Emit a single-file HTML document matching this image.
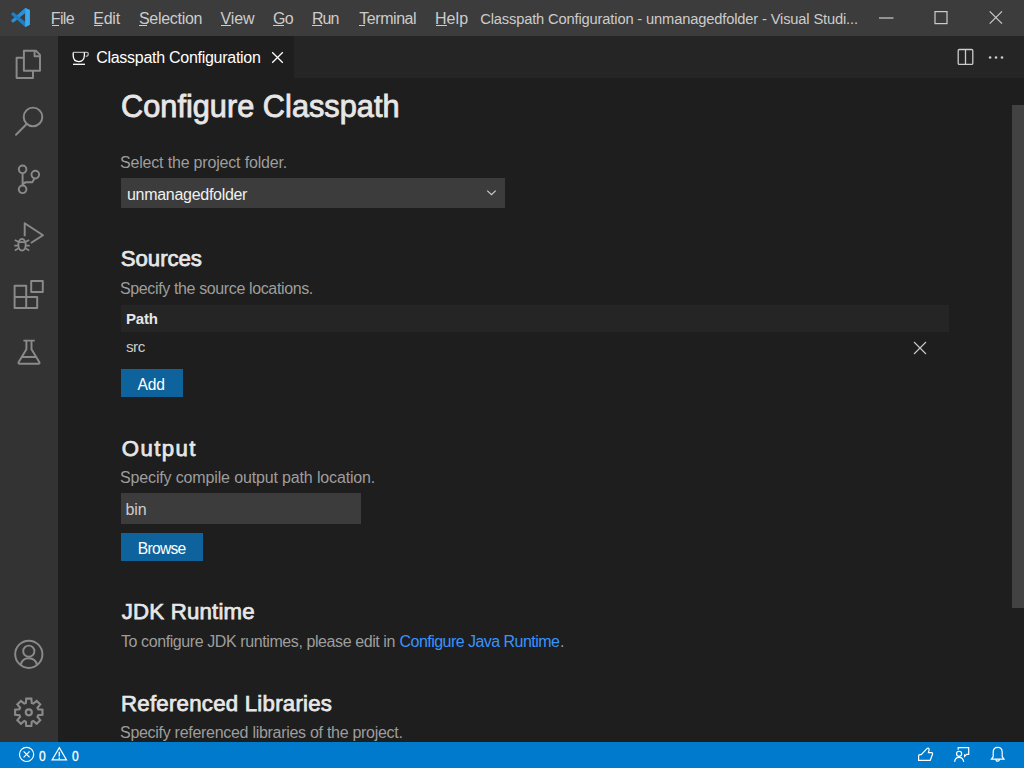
<!DOCTYPE html>
<html><head><meta charset="utf-8">
<style>
*{margin:0;padding:0;box-sizing:border-box}
html,body{width:1024px;height:768px;overflow:hidden;background:#1e1e1e;font-family:"Liberation Sans",sans-serif}
.a{position:absolute;white-space:pre;line-height:1}
.b{position:absolute}
svg{position:absolute;overflow:visible}
</style></head><body>
<div class="b" style="left:0;top:0;width:1024px;height:36px;background:#3c3c3c"></div>
<div class="b" style="left:0;top:36px;width:58px;height:706px;background:#333333"></div>
<div class="b" style="left:58px;top:36px;width:966px;height:42px;background:#252526"></div>
<div class="b" style="left:58px;top:36px;width:236px;height:42px;background:#1e1e1e"></div>
<div class="b" style="left:121px;top:178px;width:384px;height:30px;background:#3c3c3c"></div>
<div class="b" style="left:121px;top:305px;width:828px;height:27px;background:#252526"></div>
<div class="b" style="left:121px;top:369px;width:62px;height:28px;background:#0e639c"></div>
<div class="b" style="left:121px;top:493px;width:240px;height:31px;background:#3c3c3c"></div>
<div class="b" style="left:121px;top:533px;width:82px;height:28px;background:#0e639c"></div>
<div class="b" style="left:1012px;top:105px;width:12px;height:503px;background:#424242"></div>
<div class="a" style="left:50.80px;top:10.71px;font-size:16px;font-weight:400;color:#cccccc;letter-spacing:-0.667px;">File</div>
<div class="a" style="left:93.20px;top:10.71px;font-size:16px;font-weight:400;color:#cccccc;letter-spacing:-0.200px;">Edit</div>
<div class="a" style="left:139.00px;top:10.71px;font-size:16px;font-weight:400;color:#cccccc;letter-spacing:-0.300px;">Selection</div>
<div class="a" style="left:220.60px;top:10.71px;font-size:16px;font-weight:400;color:#cccccc;letter-spacing:-0.167px;">View</div>
<div class="a" style="left:273.00px;top:10.71px;font-size:16px;font-weight:400;color:#cccccc;letter-spacing:-0.600px;">Go</div>
<div class="a" style="left:312.00px;top:10.71px;font-size:16px;font-weight:400;color:#cccccc;letter-spacing:-0.950px;">Run</div>
<div class="a" style="left:359.20px;top:10.71px;font-size:16px;font-weight:400;color:#cccccc;letter-spacing:-0.429px;">Terminal</div>
<div class="a" style="left:435.00px;top:10.71px;font-size:16px;font-weight:400;color:#cccccc;letter-spacing:0.067px;">Help</div>
<div class="a" style="left:480.20px;top:11.81px;font-size:14.7px;font-weight:400;color:#cccccc;letter-spacing:-0.153px;">Classpath Configuration - unmanagedfolder - Visual Studi...</div>
<div class="a" style="left:96.20px;top:49.91px;font-size:16px;font-weight:400;color:#ffffff;letter-spacing:-0.277px;">Classpath Configuration</div>
<div class="a" style="left:121.00px;top:92.16px;font-size:30.7px;font-weight:400;-webkit-text-stroke:0.850px #e7e7e7;color:#e7e7e7;letter-spacing:0.028px;">Configure Classpath</div>
<div class="a" style="left:120.00px;top:154.81px;font-size:16px;font-weight:400;color:#9d9d9d;letter-spacing:-0.180px;">Select the project folder.</div>
<div class="a" style="left:127.00px;top:187.01px;font-size:16px;font-weight:400;color:#f0f0f0;letter-spacing:-0.293px;">unmanagedfolder</div>
<div class="a" style="left:120.80px;top:248.26px;font-size:22.2px;font-weight:400;-webkit-text-stroke:0.750px #e7e7e7;color:#e7e7e7;letter-spacing:-0.050px;">Sources</div>
<div class="a" style="left:120.00px;top:281.11px;font-size:16px;font-weight:400;color:#9d9d9d;letter-spacing:-0.371px;">Specify the source locations.</div>
<div class="a" style="left:126.00px;top:311.45px;font-size:15px;font-weight:700;color:#e7e7e7;letter-spacing:-0.167px;">Path</div>
<div class="a" style="left:126.00px;top:339.48px;font-size:15.2px;font-weight:400;color:#cccccc;letter-spacing:-0.500px;">src</div>
<div class="a" style="left:137.60px;top:377.14px;font-size:15.6px;font-weight:400;color:#ffffff;letter-spacing:-0.200px;">Add</div>
<div class="a" style="left:121.80px;top:437.56px;font-size:22.2px;font-weight:400;-webkit-text-stroke:0.750px #e7e7e7;color:#e7e7e7;letter-spacing:1.380px;">Output</div>
<div class="a" style="left:120.00px;top:470.31px;font-size:16px;font-weight:400;color:#9d9d9d;letter-spacing:-0.147px;">Specify compile output path location.</div>
<div class="a" style="left:125.40px;top:501.81px;font-size:16px;font-weight:400;color:#cccccc;letter-spacing:0.000px;">bin</div>
<div class="a" style="left:137.80px;top:540.94px;font-size:15.6px;font-weight:400;color:#ffffff;letter-spacing:-0.720px;">Browse</div>
<div class="a" style="left:121.80px;top:601.36px;font-size:22.2px;font-weight:400;-webkit-text-stroke:0.750px #e7e7e7;color:#e7e7e7;letter-spacing:0.210px;">JDK Runtime</div>
<div class="a" style="left:121.00px;top:633.71px;font-size:16px;font-weight:400;color:#9d9d9d;letter-spacing:-0.410px;">To configure JDK runtimes, please edit in</div>
<div class="a" style="left:399.60px;top:633.71px;font-size:16px;font-weight:400;color:#3794ff;letter-spacing:-0.538px;">Configure Java Runtime</div>
<div class="a" style="left:560.00px;top:633.71px;font-size:16px;font-weight:400;color:#9d9d9d;letter-spacing:0.000px;">.</div>
<div class="a" style="left:121.00px;top:692.56px;font-size:22.2px;font-weight:400;-webkit-text-stroke:0.750px #e7e7e7;color:#e7e7e7;letter-spacing:0.263px;">Referenced Libraries</div>
<div class="a" style="left:120.00px;top:725.01px;font-size:16px;font-weight:400;color:#9d9d9d;letter-spacing:-0.288px;">Specify referenced libraries of the project.</div>
<div class="a" style="left:51.5px;top:24.6px;width:7.4px;height:1.2px;background:#cccccc"></div><div class="a" style="left:94.1px;top:24.6px;width:7.8px;height:1.2px;background:#cccccc"></div><div class="a" style="left:139.4px;top:24.6px;width:8.1px;height:1.2px;background:#cccccc"></div><div class="a" style="left:221.4px;top:24.6px;width:9.4px;height:1.2px;background:#cccccc"></div><div class="a" style="left:273.4px;top:24.6px;width:10.5px;height:1.2px;background:#cccccc"></div><div class="a" style="left:312.3px;top:24.6px;width:9.7px;height:1.2px;background:#cccccc"></div><div class="a" style="left:358.5px;top:24.6px;width:6.9px;height:1.2px;background:#cccccc"></div><div class="a" style="left:435.9px;top:24.6px;width:10.9px;height:1.2px;background:#cccccc"></div>
<div class="b" style="left:0;top:742px;width:1024px;height:26px;background:#007acc"></div>
<svg width="1024" height="768" style="left:0;top:0" viewBox="0 0 1024 768">
 <!-- vscode logo -->
 <g>
  <path d="M25.2,7.9 L29.8,10.1 V24.7 L25.2,27 L25.2,13 L13.9,22.3 Q13.2,22.8 12.5,22.3 L11.5,21.5 Q10.8,20.8 11.5,20.1 Z" fill="#2a8fd6"/>
  <path d="M25.2,7.9 L29.8,10.1 V24.7 L25.2,27 L11.5,14.8 Q10.8,14.1 11.5,13.4 L12.5,12.6 Q13.2,12.1 13.9,12.6 L25.2,22 Z" fill="#1d7fc4"/>
  <path d="M25.2,7.9 L29.8,10.1 V24.7 L25.2,27 Z" fill="#38a8f0"/>
 </g>
 <!-- title controls -->
 <g stroke="#cccccc" fill="none" stroke-width="1.2">
  <path d="M879,18 H893.5"/>
  <rect x="935" y="11.6" width="12" height="12"/>
  <path d="M989.7,11.4 L1002,23.7 M1002,11.4 L989.7,23.7"/>
 </g>
 <!-- activity icons -->
 <g stroke="#8a8a8a" fill="none" stroke-width="1.95" stroke-linejoin="round">
  <path d="M23.9,57.8 H16.6 V77.9 H33 V70.8"/>
  <path d="M23.9,50.8 H36.1 L40,54.9 V70.8 H23.9 Z"/>
  <path d="M34.6,50.8 V56.3 H40"/>
  <circle cx="33" cy="116.9" r="9.3"/>
  <path d="M26.4,124.2 L16,134.8" stroke-linecap="round"/>
  <circle cx="22.6" cy="169.3" r="3.8"/>
  <circle cx="22.6" cy="189.3" r="3.8"/>
  <circle cx="35.3" cy="174.6" r="3.8"/>
  <path d="M22.6,173.1 V185.5 M22.6,185.5 Q23.2,182.2 26.5,182.2 H32.3 L34.6,178.3"/>
  <path d="M24.7,236.3 V223.3 L43,235.3 L30.9,243"/>
  <ellipse cx="22" cy="244.8" rx="3.7" ry="5.8"/>
  <path d="M18.4,242.1 H25.6 M14.8,239.9 L18.2,241.7 M29.2,239.9 L25.8,241.7 M14.3,245.6 H18.3 M29.7,245.6 H25.7 M14.8,250.4 L18.2,248.5 M29.2,250.4 L25.8,248.5" stroke-width="1.7"/>
  <path d="M14.6,285.8 H26.2 V297 H37.2 V307.9 H14.6 Z M14.6,297 H26.2 V307.9"/>
  <rect x="31.2" y="280.9" width="11.6" height="11.1"/>
  <path d="M23.4,340.6 H34.8 M26.4,340.6 V349.2 L18.6,362.2 Q18,363.8 19.8,363.8 H38.2 Q40,363.8 39.4,362.2 L31.5,349.2 V340.6 M22.4,357 H35.6"/>
  <circle cx="28.8" cy="654.3" r="13.6"/>
  <circle cx="28.8" cy="651.2" r="5.6"/>
  <path d="M20.8,665 Q22,658.2 28.8,658.2 Q35.6,658.2 37,665"/>
 </g>
 <!-- gear -->
 <path id="gear" d="M25.85,702.95 L26.27,698.63 L31.33,698.63 L31.75,702.95 L33.33,703.61 L36.67,700.84 L40.26,704.43 L37.49,707.77 L38.15,709.35 L42.47,709.77 L42.47,714.83 L38.15,715.25 L37.49,716.83 L40.26,720.17 L36.67,723.76 L33.33,720.99 L31.75,721.65 L31.33,725.97 L26.27,725.97 L25.85,721.65 L24.27,720.99 L20.93,723.76 L17.34,720.17 L20.11,716.83 L19.45,715.25 L15.13,714.83 L15.13,709.77 L19.45,709.35 L20.11,707.77 L17.34,704.43 L20.93,700.84 L24.27,703.61 Z" fill="none" stroke="#8a8a8a" stroke-width="2.1" stroke-linejoin="miter"/>
 <circle cx="28.8" cy="712.3" r="3.0" fill="none" stroke="#8a8a8a" stroke-width="2.2"/>
 <!-- tab icons -->
 <g stroke="#ffffff" fill="none" stroke-width="1.3">
  <path d="M73.2,52.4 H87 Q88.3,52.4 88.3,53.8 Q88.3,56.4 85.6,56.4" stroke="#b0b0b0"/>
  <path d="M73.2,52.4 V55.5 Q73.2,61.6 79,61.6 Q84.2,61.6 84.4,55 V52.4"/>
  <path d="M73,64.3 H85" stroke-width="1.3"/>
  <path d="M272.2,52.2 L282.8,62.8 M282.8,52.2 L272.2,62.8"/>
 </g>
 <g stroke="#cccccc" fill="none" stroke-width="1.3">
  <rect x="958.2" y="49.5" width="14.6" height="14.9" rx="1.2"/>
  <path d="M965.5,49.5 V64.4"/>
 </g>
 <g fill="#cccccc">
  <circle cx="990.1" cy="57.5" r="1.3"/><circle cx="996" cy="57.5" r="1.3"/><circle cx="1002" cy="57.5" r="1.3"/>
 </g>
 <!-- dropdown chevron -->
 <path d="M487.2,190.6 L491.5,194.7 L495.7,190.6" stroke="#cccccc" stroke-width="1.2" fill="none"/>
 <!-- row remove X -->
 <path d="M914,342 L926,354 M926,342 L914,354" stroke="#cccccc" stroke-width="1.1" fill="none"/>
 <!-- status icons -->
 <g stroke="#ffffff" fill="none" stroke-width="1.2">
  <circle cx="26.6" cy="754.4" r="7.1"/>
  <path d="M23.6,751.4 L29.6,757.4 M29.6,751.4 L23.6,757.4"/>
  <path d="M59.3,747.6 L66.5,759.9 H52.1 Z"/>
  <path d="M59.3,751.8 V756.4 M59.3,757.6 V758.9" stroke-width="1.4"/>
  <path d="M918.6,755.9 Q918.6,754.8 919.8,754.7 L921.2,754.6 L926.9,748.7 Q928.2,747.6 929,748.9 Q929.3,749.6 928.9,750.6 L928.4,752.7 H931.7 Q932.9,752.9 932.5,754.2 L930.2,760.4 H918.6 Z"/>
  <path d="M958.2,749.8 V747.7 H968.7 V754.3 H966.7 L964.6,756.4 V754.3"/>
  <circle cx="959.1" cy="753.8" r="2.55"/>
  <path d="M954.6,761.9 Q955,757.3 959.1,757.3 Q963.2,757.3 963.7,761.9"/>
  <path d="M991.4,759.2 H1004 L1002.2,756.7 V752.3 Q1002.2,747.4 997.7,747.4 Q993.2,747.4 993.2,752.3 V756.7 Z M996,759.2 Q996,761.2 997.7,761.2 Q999.4,761.2 999.4,759.2"/>
 </g>
</svg>
<div class="a" style="left:39.00px;top:748.50px;font-size:14px;font-weight:400;color:#ffffff;letter-spacing:0.000px;transform:scaleX(0.86);transform-origin:0 0;-webkit-text-stroke:0.35px #ffffff;">0</div>
<div class="a" style="left:72.00px;top:748.50px;font-size:14px;font-weight:400;color:#ffffff;letter-spacing:0.000px;transform:scaleX(0.86);transform-origin:0 0;-webkit-text-stroke:0.35px #ffffff;">0</div>
</body></html>
